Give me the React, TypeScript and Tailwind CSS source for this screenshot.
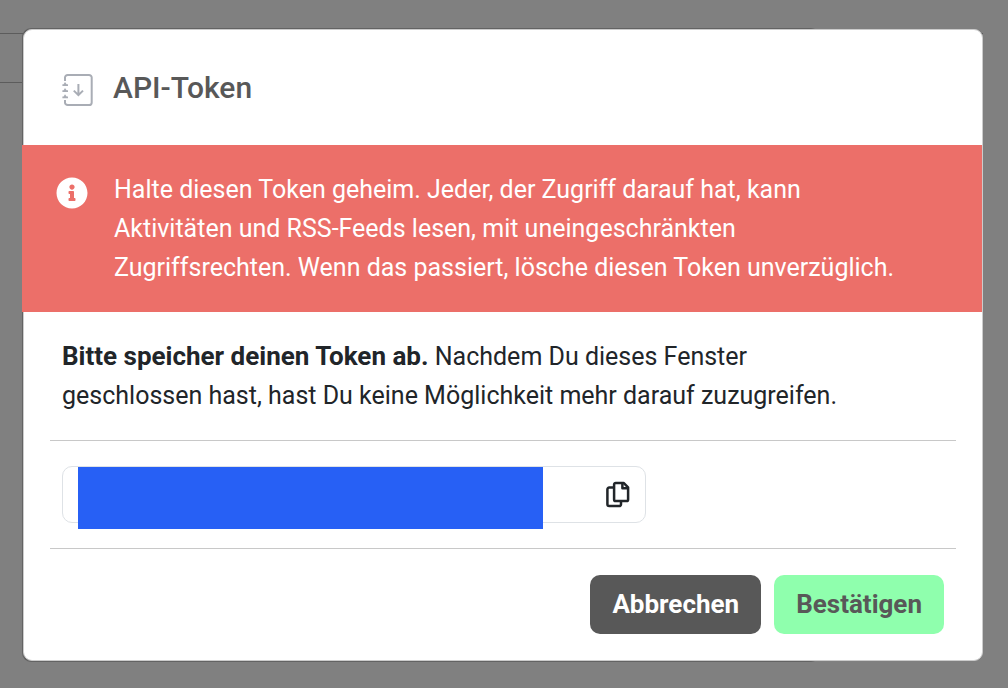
import { useState } from "react";
import { FaInfoCircle } from "react-icons/fa";

function JournalIcon() {
  return (
    <svg width="32" height="34" viewBox="0 0 32 34" fill="none" stroke="#a9adb5" strokeWidth="2" aria-hidden="true">
      <path d="M3 8V4.6A2.7 2.7 0 0 1 5.7 1.9H27A2.7 2.7 0 0 1 29.7 4.6V29.4A2.7 2.7 0 0 1 27 32.1H5.7A2.7 2.7 0 0 1 3 29.4V27" />
      <path d="M16.4 11V22M11.8 17.6L16.4 22.2L21 17.6" />
      <path
        d="M3 9L4.6 11.2H6V13H0.4V11.2H1.6ZM3 15L4.6 17.2H6V19H0.4V17.2H1.6ZM3 21.2L4.6 23.4H6V25.2H0.4V23.4H1.6Z"
        fill="#a9adb5"
        stroke="none"
      />
    </svg>
  );
}

function CopyIcon() {
  return (
    <svg width="24" height="28" viewBox="0 0 24 28" fill="none" stroke="#212529" strokeWidth="2.5" strokeLinejoin="round" aria-hidden="true">
      <path d="M8 6.6H3.2A1.8 1.8 0 0 0 1.4 8.4V23.3A1.8 1.8 0 0 0 3.2 25.1H13.2A1.8 1.8 0 0 0 15 23.3V20.3" />
      <path d="M9.7 1.9H17.6L22.1 6.3V18.5A1.6 1.6 0 0 1 20.5 20.1H9.7A1.6 1.6 0 0 1 8.1 18.5V3.5A1.6 1.6 0 0 1 9.7 1.9Z" />
      <path d="M16.4 2.2V7.2H21.8" />
    </svg>
  );
}

export default function App() {
  const [token] = useState("");

  return (
    <div className="relative isolate min-h-screen bg-[#808080] pt-[29px] pr-[25px] pb-[27px] pl-[23px] font-[Roboto,sans-serif] text-[25px] leading-[39px] text-[#212529]">
      {/* page rows behind the backdrop */}
      <div className="absolute inset-x-0 top-[33px] -z-20 mr-[25px] h-[50px] border-y border-[#5c5c5c]" />

      <div role="dialog" aria-modal="true" aria-labelledby="token-title" className="relative rounded-[9px] border border-[#cccccc] bg-white">
        <div className="absolute -top-0.5 -bottom-0.5 -left-0.5 -z-10 w-5/6 rounded-[9px] bg-[#636363]" />

        <header className="flex items-end gap-[19px] p-[38px]">
          <JournalIcon />
          <h1 id="token-title" className="text-[30px] font-medium text-[#585858]">
            API-Token
          </h1>
        </header>

        <div role="alert" className="-ml-0.5 flex items-start gap-[26px] bg-[#ec6f69] py-[25px] pr-[72px] pl-[34px] text-white">
          <FaInfoCircle className="mt-[7px] size-8 shrink-0" />
          <p>
            Halte diesen Token geheim. Jeder, der Zugriff darauf hat, kann Aktivitäten und RSS-Feeds lesen, mit
            uneingeschränkten Zugriffsrechten. Wenn das passiert, lösche diesen Token unverzüglich.
          </p>
        </div>

        <div className="px-[26px]">
          <p className="py-[25px] pr-24 pl-3">
            <strong className="text-[26px] font-bold">Bitte speicher deinen Token ab.</strong> Nachdem Du dieses
            Fenster geschlossen hast, hast Du keine Möglichkeit mehr darauf zuzugreifen.
          </p>

          <div className="border-y border-[#c8c8c8] px-3 py-[25px]">
            <div className="relative flex h-[57px] w-[584px] max-w-full items-center rounded-[10px] border border-[#dee2e6] pr-[15px] pl-4">
              <input type="text" readOnly aria-label="API-Token" value={token} className="min-w-0 flex-1 outline-none" />
              {/* token is masked */}
              <div className="absolute top-0 left-[15px] h-[62px] w-[465px] bg-[#2760f5]" />
              <button
                type="button"
                aria-label="Token kopieren"
                onClick={() => navigator.clipboard?.writeText(token)}
              >
                <CopyIcon />
              </button>
            </div>
          </div>
        </div>

        <footer className="flex justify-end gap-[13px] px-[38px] py-[26px] text-[26px] leading-[39px]">
          <button type="button" className="rounded-[10px] bg-[#585858] px-[22px] py-2.5 font-bold text-white">
            Abbrechen
          </button>
          <button type="button" className="rounded-[10px] bg-[#8fffad] px-[22px] py-2.5 font-bold text-[#585858]">
            Bestätigen
          </button>
        </footer>
      </div>
    </div>
  );
}
